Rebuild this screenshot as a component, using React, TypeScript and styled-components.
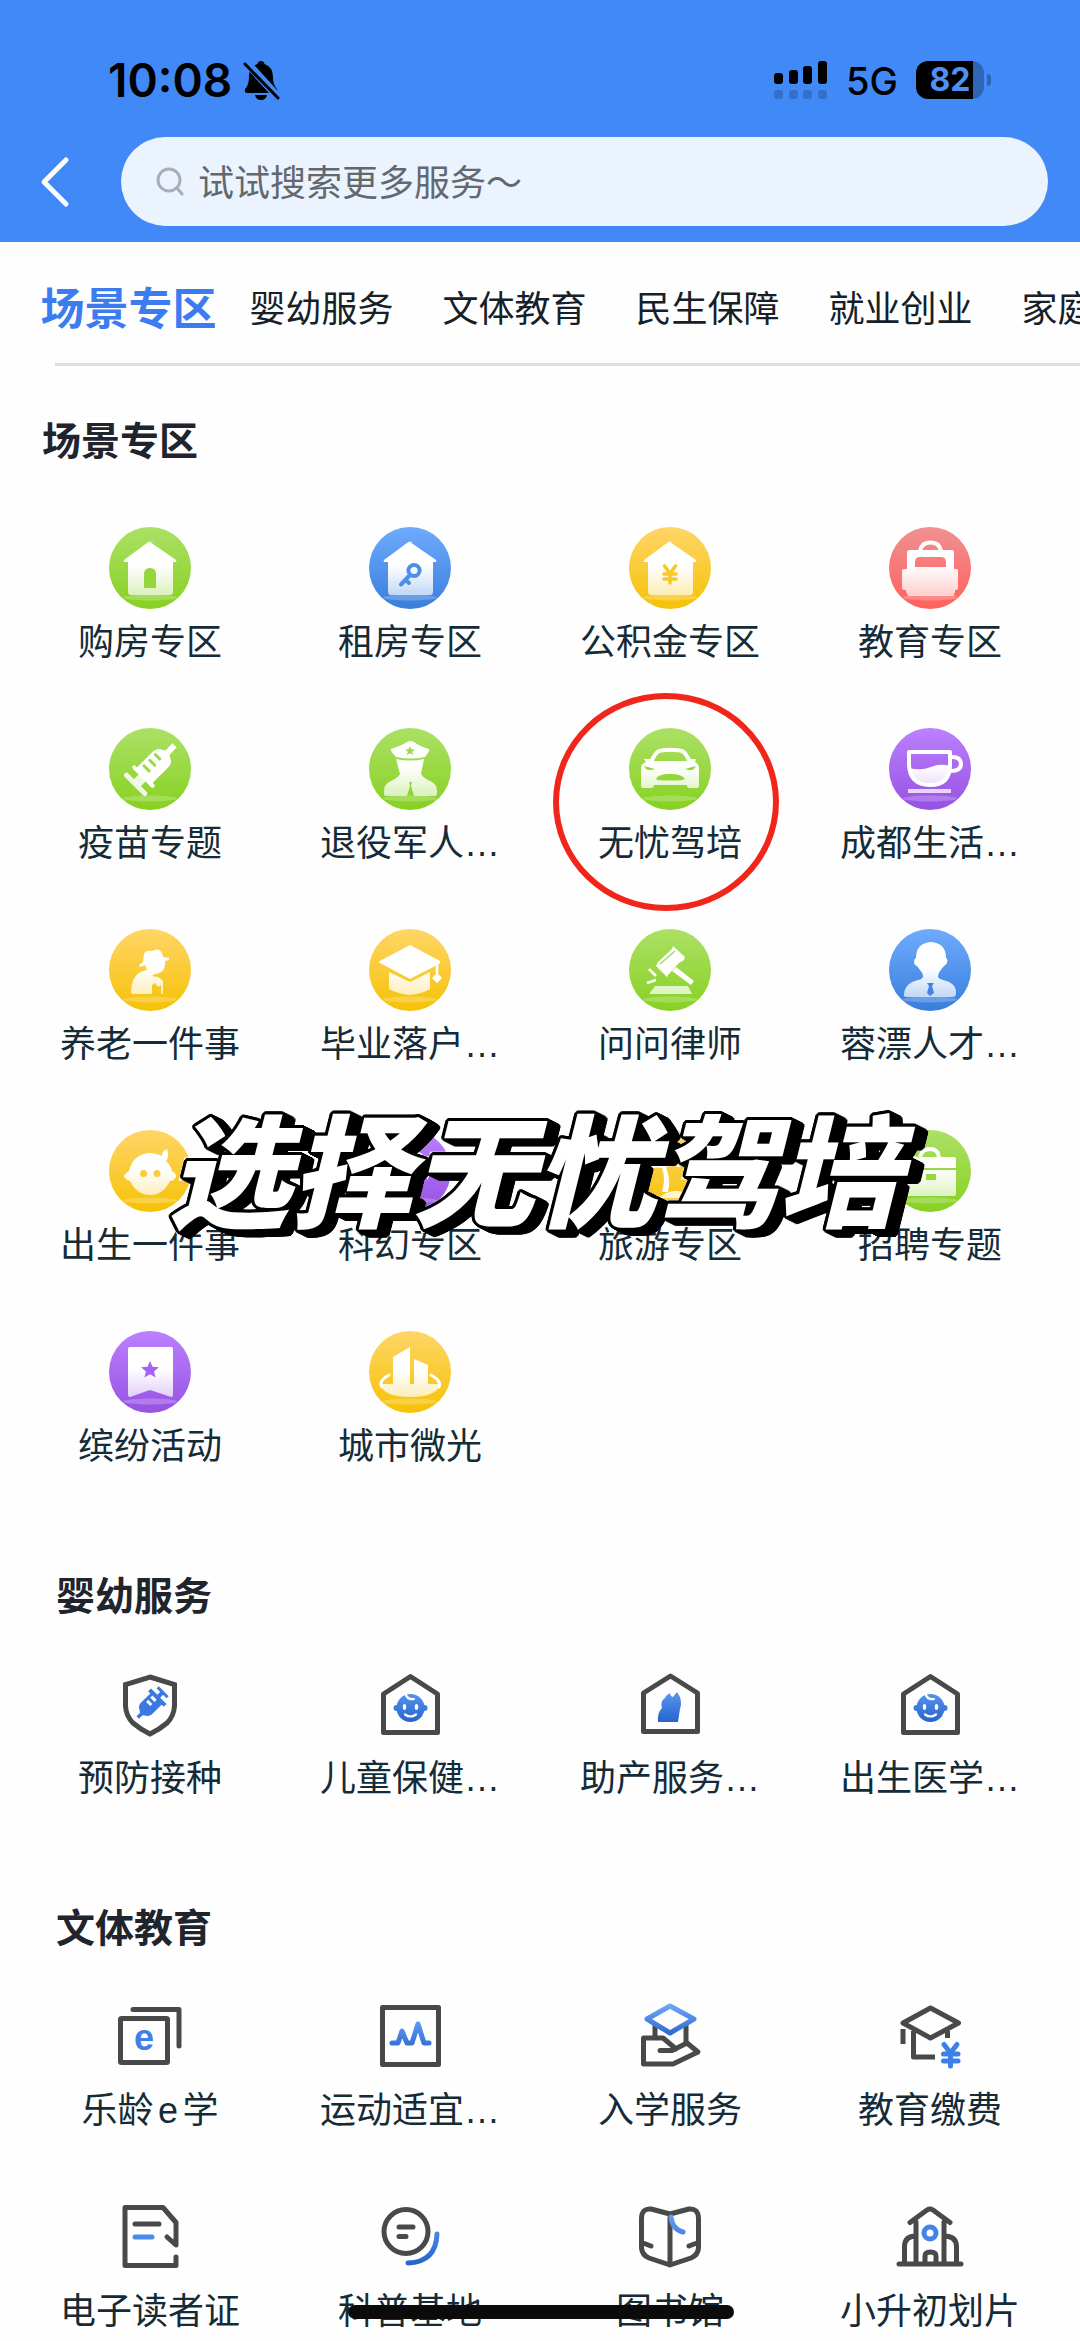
import React from 'react';
import styled, { createGlobalStyle } from 'styled-components';

const sans = `'Liberation Sans', 'Noto Sans CJK SC', sans-serif`;
const cjk = `'Noto Sans CJK SC', sans-serif`;

const GlobalStyle = createGlobalStyle`
  *, *::before, *::after { box-sizing: border-box; }
  body { margin: 0; background: #fefefe; overflow-x: hidden; }
`;

const Page = styled.div`
  position: relative;
  font-family: ${sans};
  color: #152b38;
  background: #fefefe;
  overflow: hidden;
`;

const Header = styled.header`
  background: #4189f7;
  padding: 58px 32px 16px 32px;
`;

const StatusBar = styled.div`
  display: flex;
  align-items: center;
  justify-content: space-between;
  height: 44px;
  padding: 0 64px 0 76px;
  color: #000;
`;

const StatusGroup = styled.div<{ $gap: number }>`
  display: flex;
  align-items: center;
  gap: ${(p) => p.$gap}px;
`;

const Clock = styled.span`
  font: 600 46px/44px Inter, sans-serif;
`;

const Network = styled.span`
  padding-top: 2px;
  font: 500 38px/44px Inter, sans-serif;
`;

const Battery = styled.div`
  position: relative;
  display: flex;
  align-items: center;
  justify-content: center;
  width: 68px;
  height: 38px;
  border-radius: 12px;
  background: linear-gradient(90deg, #000 57px, #2f65b5 57px);
  color: #4f90f5;
  font: 700 32px/38px Inter, sans-serif;

  &::after {
    content: '';
    position: absolute;
    left: 71px;
    width: 4px;
    height: 12px;
    border-radius: 0 4px 4px 0;
    background: #2f65b5;
  }
`;

const SearchRow = styled.div`
  display: flex;
  align-items: center;
  gap: 48px;
  margin-top: 35px;
`;

const BackButton = styled.button`
  display: flex;
  width: 41px;
  padding: 0;
  border: 0;
  background: none;
`;

const SearchBox = styled.label`
  display: flex;
  flex: 1;
  align-items: center;
  gap: 14px;
  height: 89px;
  padding: 0 36px 0 34px;
  border-radius: 45px;
  background: #ebf3fe;
`;

const SearchInput = styled.input`
  flex: 1;
  min-width: 0;
  padding: 0 0 4px;
  border: 0;
  outline: 0;
  background: none;
  color: #63676e;
  font: 400 36px/48px ${cjk};
  &::placeholder { color: #63676e; opacity: 1; }
`;

const Tabs = styled.nav`
  display: flex;
  height: 121px;
  padding: 4px 0 0 32px;
  overflow: hidden;
`;

const Tab = styled.button<{ $active?: boolean }>`
  flex: 0 0 193px;
  height: 120px;
  padding: 0;
  border: 0;
  background: none;
  white-space: nowrap;
  color: ${(p) => (p.$active ? '#3c7bf0' : '#152028')};
  font: ${(p) => (p.$active ? '700 44px' : '400 36px')}/48px ${cjk};
`;

const Divider = styled.hr`
  height: 3px;
  margin: 0 0 0 55px;
  border: 0;
  background: #dfdfdf;
`;

const Section = styled.section<{ $top: number }>`
  padding-top: ${(p) => p.$top}px;
`;

const SectionTitle = styled.h2<{ $indent: number; $gap: number }>`
  margin: 0 0 ${(p) => p.$gap}px ${(p) => p.$indent}px;
  color: #20242d;
  font: 700 39px/48px ${cjk};
`;

const Grid = styled.ul`
  display: grid;
  grid-template-columns: repeat(4, minmax(0, 1fr));
  row-gap: 65px;
  margin: 0;
  padding: 0 20px;
  list-style: none;
`;

const Tile = styled.li`
  position: relative;
`;

const TileLink = styled.a`
  display: flex;
  flex-direction: column;
  align-items: center;
  gap: 14px;
  color: inherit;
  text-decoration: none;
  white-space: nowrap;
  font-size: 36px;
  line-height: 40px;
  text-autospace: normal;
`;

const Ring = styled.span`
  position: absolute;
  top: -35px;
  left: 50%;
  width: 226px;
  height: 218px;
  margin-left: -117px;
  border: 6px solid #f1261b;
  border-radius: 50%;
  pointer-events: none;
`;

const outline = Array.from({ length: 16 }, (_, i) => {
  const a = (i / 16) * Math.PI * 2;
  return [Math.round(Math.cos(a) * 3), Math.round(Math.sin(a) * 3)];
});
const extrusion = [0, 2, 4, 6, 8, 10]
  .flatMap((step) => outline.map(([x, y]) => `${x + step}px ${y + step / 2}px 0 #000`))
  .join(', ');

const Caption = styled.p`
  position: absolute;
  top: 1085px;
  left: 0;
  right: 12px;
  margin: 0;
  text-align: center;
  color: #fff;
  font: italic 900 122px/160px ${cjk};
  -webkit-text-stroke: 7px #fff;
  paint-order: stroke fill;
  stroke-linejoin: round;
  text-shadow: ${extrusion};
  pointer-events: none;
`;

const HomeBar = styled.div`
  position: fixed;
  bottom: 22px;
  left: 50%;
  width: 386px;
  height: 14px;
  margin-left: -192px;
  border-radius: 7px;
  background: #0b0b0b;
`;

const DISC = {
  green: ['#ace066', '#87d122'],
  blue: ['#6fabfd', '#387edc'],
  yellow: ['#ffd567', '#f5c206'],
  red: ['#f09092', '#ff615c'],
  purple: ['#bc80ff', '#9652e2'],
} as const;
type Tone = keyof typeof DISC;

const W = 'url(#fade)';
const HOUSE = 'M41 15 67 33Q68 35 66 35H64V65Q64 68 61 68H22Q19 68 19 65V35H16Q14 35 15 33L38 16Q41 13 44 16Z';

function Disc({ tone, children }: { tone: Tone; children: React.ReactNode }) {
  const [top, bottom] = DISC[tone];
  return (
    <svg width="82" height="82" viewBox="0 0 82 82" aria-hidden="true">
      <defs>
        <linearGradient id={`disc-${tone}`} x1="0" y1="0" x2="0" y2="1">
          <stop offset="0" stopColor={top} />
          <stop offset="1" stopColor={bottom} />
        </linearGradient>
        <linearGradient id="fade" gradientUnits="userSpaceOnUse" x1="0" y1="38" x2="0" y2="70">
          <stop offset="0" stopColor="#fff" />
          <stop offset="1" stopColor="#fff" stopOpacity="0.65" />
        </linearGradient>
      </defs>
      <circle cx="41" cy="41" r="41" fill={`url(#disc-${tone})`} />
      <ellipse cx="41" cy="70.5" rx="27" ry="3" fill="#fff" opacity="0.22" />
      {children}
    </svg>
  );
}

const INK = '#474a49';
const B = 'url(#ink-blue)';

function Line({ children }: { children: React.ReactNode }) {
  return (
    <svg width="82" height="82" viewBox="0 0 82 82" fill="none" stroke={INK} strokeWidth="5" strokeLinecap="round" strokeLinejoin="round" aria-hidden="true">
      <defs>
        <linearGradient id="ink-blue" gradientUnits="userSpaceOnUse" x1="0" y1="10" x2="0" y2="70">
          <stop offset="0" stopColor="#6ea6f8" />
          <stop offset="1" stopColor="#2462cc" />
        </linearGradient>
        <linearGradient id="mid-blue" gradientUnits="userSpaceOnUse" x1="0" y1="28" x2="0" y2="60">
          <stop offset="0" stopColor="#5b97f3" />
          <stop offset="1" stopColor="#2562cb" />
        </linearGradient>
        <linearGradient id="cap-blue" gradientUnits="userSpaceOnUse" x1="0" y1="10" x2="0" y2="40">
          <stop offset="0" stopColor="#6ea6f8" />
          <stop offset="1" stopColor="#2b69d2" />
        </linearGradient>
      </defs>
      {children}
    </svg>
  );
}

const STAR = 'M0-9 2.6-3.2 9-2.8 4 1.4 5.6 7.6 0 4.2-5.6 7.6-4 1.4-9-2.8-2.6-3.2Z';

const BabyHouse = () => (
  <Line>
    <path d="M14.500 31 41.500 13.500 68.500 31V69.500H14.500Z" />
    <g stroke="none">
      <ellipse cx="41.500" cy="45" rx="14" ry="14" fill="url(#mid-blue)" />
      <circle cx="27.500" cy="45" r="3" fill="url(#mid-blue)" />
      <circle cx="55.500" cy="45" r="3" fill="url(#mid-blue)" />
      <ellipse cx="35.500" cy="44" rx="1.700" ry="3" fill="#fff" />
      <ellipse cx="47.500" cy="44" rx="1.700" ry="3" fill="#fff" />
    </g>
    <path d="M36 51.500Q41.500 55.500 47 51.500M37 32Q39 37 45 36" stroke="#fff" strokeWidth="2.200" />
  </Line>
);

type Item = { label: string; icon: React.ReactNode; ringed?: boolean };

const scene: Item[] = [
  {
    label: '购房专区',
    icon: (
      <Disc tone="green">
        <path d={HOUSE} fill={W} />
        <path d="M35 61V47Q35 41 41 41T47 47V61Z" fill="#95d63c" />
      </Disc>
    ),
  },
  {
    label: '租房专区',
    icon: (
      <Disc tone="blue">
        <path d={HOUSE} fill={W} />
        <g fill="none" stroke="#4d8ee9" strokeWidth="4" strokeLinecap="round">
          <circle cx="45" cy="43.500" r="5.600" />
          <path d="M41 48 32 57.500M36.500 53 40 56" />
        </g>
      </Disc>
    ),
  },
  {
    label: '公积金专区',
    icon: (
      <Disc tone="yellow">
        <path d={HOUSE} fill={W} />
        <path d="M35.500 39 41 46.500 46.500 39M41 47V56M35 47H47M35 52H47" fill="none" stroke="#f8c92c" strokeWidth="3.600" strokeLinecap="round" />
      </Disc>
    ),
  },
  {
    label: '教育专区',
    icon: (
      <Disc tone="red">
        <path d="M31 25Q32 15.500 41.500 15.500T52 25" fill="none" stroke="#fff" strokeWidth="4" />
        <path fillRule="evenodd" d="M21 23H63Q65 23 65 25V42H67Q69 42 69 44V61Q69 63 67 63H66V65Q65 66 65 69H19Q18 66 17 65V63H15Q13 63 13 61V44Q13 42 15 42H18V25Q18 23 21 23ZM31 30Q26 30 26 35V40H57V35Q57 30 52 30Z" fill={W} />
      </Disc>
    ),
  },
  {
    label: '疫苗专题',
    icon: (
      <Disc tone="green">
        <g transform="translate(41.500 41.500) rotate(-45)" strokeLinecap="round">
          <path d="M-10-11H14Q20-11 22-6L24-3H34V3H24L22 6Q20 11 14 11H-10Z" fill="#fff" />
          <path d="M-21-13V13" stroke="#fff" strokeWidth="5" strokeOpacity="0.85" />
          <path d="M-10-13V13" stroke="#fff" strokeWidth="4" />
          <path d="M-19 0H-10" stroke="#fff" strokeWidth="10" strokeLinecap="butt" strokeOpacity="0.85" />
          <path d="M-2-7V0M6-7V0M14-7V-1" stroke="#9bd948" strokeWidth="3" />
        </g>
      </Disc>
    ),
  },
  {
    label: '退役军人…',
    icon: (
      <Disc tone="green">
        <path d="M22 21Q34 17 38 14Q41 12 45 14Q50 18 60 21Q61 23 56 29Q41 32 27 29Q21 23 22 21Z" fill="#fff" />
        <path d={STAR} transform="translate(41 23) scale(.55)" fill="#9fda4e" />
        <path d="M27 31Q41 34 55 31L52 46Q54 50 63 54Q68 57 68 63V66Q68 68 66 68H45L42 58 43 54H40L41 58 38 68H17Q15 68 15 66V63Q15 57 20 54Q29 50 31 46Z" fill={W} />
      </Disc>
    ),
  },
  {
    label: '无忧驾培',
    ringed: true,
    icon: (
      <Disc tone="green">
        <path d="M22 35Q26 23 32 22.500Q41 21 51 22.500Q57 23 61 35" fill="none" stroke="#fff" strokeWidth="4" />
        <path d="M15 31H21L23 33H60L62 31H67L66 34Q70 36 70 40V58Q70 60 68 60H60Q58 60 58 57H25Q25 60 22 60H14Q12 60 12 58V40Q12 36 17 34Z" fill={W} />
        <path d="M15 38 26 41Q20 43 17 41ZM67 38 56 41Q62 43 65 41ZM27 51Q29 46 41 46T56 51Q54 52.500 41 52.500T27 51Z" fill="#93d53a" />
      </Disc>
    ),
  },
  {
    label: '成都生活…',
    icon: (
      <Disc tone="purple">
        <path d="M20 24H61V37Q61 57 41 57T20 37Z" fill="none" stroke="#fff" strokeWidth="4" strokeLinejoin="round" />
        <path d="M20 40Q32 43 42 39Q51 35 61 38Q61 58 41 58T20 40Z" fill={W} />
        <path d="M63 29Q72 29 72 36T61 43" fill="none" stroke="#fff" strokeWidth="4" />
        <path d="M19 63H62" stroke="#fff" strokeOpacity="0.75" strokeWidth="4" />
      </Disc>
    ),
  },
  {
    label: '养老一件事',
    icon: (
      <Disc tone="yellow">
        <path d="M35 25Q37 21 43 22Q50 18 53 24L54 28L60 29Q61 31 56 32Q57 44 46 45L43 47Q53 48 54 53V65H52V56L49 58L46 54L43 56V65H24Q22 65 22 62Q23 43 38 41L36 36L31 38Q29 36 34 33Z" fill={W} />
      </Disc>
    ),
  },
  {
    label: '毕业落户…',
    icon: (
      <Disc tone="yellow">
        <path d="M41 16 71 32Q72 34 70 35L41 50 11 34Q9 33 11 32Z" fill="#fff" />
        <path d="M20 43 41 53 61 43V60Q53 65 41 66Q29 65 20 60Z" fill={W} />
        <path d="M68 34V48" stroke="#fff" strokeWidth="2.500" />
        <path d="M68 44 73 49 68 54 63 49Z" fill="#fff" />
      </Disc>
    ),
  },
  {
    label: '问问律师',
    icon: (
      <Disc tone="green">
        <path d="M44 17 56 28 55 31 50 34 39 46 38 48 27 37 29 33 43 20Z" fill="#fff" />
        <path d="M31 35 46 22" stroke="#a5dc5a" strokeWidth="1.500" />
        <path d="M47 38 65 52 62 56 43 42Z" fill="#fff" />
        <path d="M20 40 27 47M18 54 27 51" stroke="#fff" strokeWidth="2.500" />
        <path d="M26 57H59L63 65H20Z" fill="#fff" opacity="0.72" />
      </Disc>
    ),
  },
  {
    label: '蓉漂人才…',
    icon: (
      <Disc tone="blue">
        <path d="M42 13Q57 14 57 29Q59 30 58 34Q57 36 55 37L51 42Q49 45 49 48Q50 50 54 51Q68 54 67 65Q67 68 63 68H18Q14 68 15 65Q16 54 29 51Q34 50 34 47Q34 44 31 41L28 37Q25 36 25 33Q25 30 27 29Q27 14 42 13Z" fill={W} />
        <path d="M38 54H45L43 57 45 64 41 67 38 64 40 57Z" fill="#4385e2" />
      </Disc>
    ),
  },
  {
    label: '出生一件事',
    icon: (
      <Disc tone="yellow">
        <path d="M41 23Q49 24 53 26Q52 22 58 19Q59 22 59 25Q59 29 57 31Q62 36 63 41Q68 44 67 47Q65 51 61 51Q54 65 41 65T21 51Q17 50 15 47Q15 44 20 41Q24 24 41 23Z" fill={W} />
        <circle cx="34.500" cy="43.500" r="3.500" fill="#fbcb38" />
        <circle cx="48" cy="43.500" r="3.500" fill="#fbcb38" />
      </Disc>
    ),
  },
  {
    label: '科幻专区',
    icon: (
      <Disc tone="purple">
        <circle cx="41" cy="40" r="20" fill={W} />
        <path d="M44 54Q62 48 66 30" fill="none" stroke="#fff" strokeWidth="3" />
        <circle cx="54" cy="50" r="4" fill="#a765ee" />
      </Disc>
    ),
  },
  {
    label: '旅游专区',
    icon: (
      <Disc tone="yellow">
        <path d="M17 42Q22 30 33 33Q42 26 51 37Q43 35 37 37Q42 50 39 62H33Q37 48 33 38Q26 36 17 42Z" fill="#fff" />
        <path d="M30 68Q38 60 48 61T67 68Z" fill="#fff" opacity="0.8" />
      </Disc>
    ),
  },
  {
    label: '招聘专题',
    icon: (
      <Disc tone="green">
        <path d="M31 27Q33 19 41 19T50 27" fill="none" stroke="#fff" strokeWidth="4" />
        <path d="M17 27H65Q67 27 67 29V38H15V29Q15 27 17 27Z" fill="#fff" />
        <path fillRule="evenodd" d="M15 40H67V64Q67 66 65 66H17Q15 66 15 64ZM37 44V50H47V44Z" fill={W} />
      </Disc>
    ),
  },
  {
    label: '缤纷活动',
    icon: (
      <Disc tone="purple">
        <path d="M21 16H62Q64 16 64 18V64Q64 66 62 66L41 59 21 66Q19 66 19 64V18Q19 16 21 16Z" fill={W} />
        <path d={STAR} transform="translate(41 39)" fill="#a564ee" />
      </Disc>
    ),
  },
  {
    label: '城市微光',
    icon: (
      <Disc tone="yellow">
        <path d="M24 26 41 16V53H45V28L59 34V53H71Q68 66 41 66T12 53H24Z" fill={W} />
        <path d="M20 44Q9 50 13 56M62 44Q73 50 70 56" fill="none" stroke="#fff" strokeWidth="3" strokeLinecap="round" />
      </Disc>
    ),
  },
];

const infant: Item[] = [
  {
    label: '预防接种',
    icon: (
      <Line>
        <path d="M41 14 65.500 21.500V43Q65 53 58 60Q51 66 41 71Q31 66 24 60Q17 53 16.500 43V21.500Z" strokeLinejoin="miter" />
        <g transform="translate(42 41) rotate(-45)" stroke="none" fill="#3b79e0">
          <path d="M-19-1.500H-14L-11-6Q-9-8-7-8H7V-11H11V-2H15V-7H18V7H15V2H11V11H7V8H-7Q-9 8-11 6L-14 2H-19Z" />
          <path d="M-2-5H1V1H-2ZM4-5H7V1H4Z" fill="#fff" />
        </g>
      </Line>
    ),
  },
  { label: '儿童保健…', icon: <BabyHouse /> },
  {
    label: '助产服务…',
    icon: (
      <Line>
        <path d="M14.500 30 41.500 13 68.500 30V68.500H14.500Z" />
        <path d="M37 33 41 30Q41 33 44 34L48 29 51 34Q53 41 51 46Q50 52 49 59H29Q28 50 33 45Q31 38 36 35Z" fill="url(#mid-blue)" stroke="none" />
      </Line>
    ),
  },
  { label: '出生医学…', icon: <BabyHouse /> },
];

const culture: Item[] = [
  {
    label: '乐龄e学',
    icon: (
      <Line>
        <rect x="11.500" y="23.500" width="47" height="44" rx="1" />
        <path d="M24 14.500H70V51" />
        <text x="35" y="55" textAnchor="middle" fill="#3f80e6" stroke="none" fontFamily="Liberation Sans, sans-serif" fontWeight="700" fontSize="36">e</text>
      </Line>
    ),
  },
  {
    label: '运动适宜…',
    icon: (
      <Line>
        <rect x="13.500" y="12.500" width="56" height="57" />
        <path d="M23 48H29L33 36 38 48H43L49 29 55 48H60" stroke="url(#mid-blue)" />
      </Line>
    ),
  },
  {
    label: '入学服务',
    icon: (
      <Line>
        <path d="M26 31V42M57 31V47" />
        <path d="M41 11 65 24 41 38 18 24Z" stroke="url(#cap-blue)" />
        <path d="M31 55.500H43L58 48 69 57 44 69H14.500V43H34L47 54" />
      </Line>
    ),
  },
  {
    label: '教育缴费',
    icon: (
      <Line>
        <path d="M41.500 13 69.500 28 41.500 43 14 28Z" />
        <path d="M14 34V49M24.500 36V62H46M58.500 36V43" strokeLinecap="butt" />
        <path d="M55 49.500 61.500 58 68 49.500M61.500 59V71M54.500 59H69M54.500 66H69" stroke="#3f80e6" />
      </Line>
    ),
  },
  {
    label: '电子读者证',
    icon: (
      <Line>
        <path d="M67 61V69.500H16V11.500H54L67 26.500V49L58 41M26 28H50" />
        <path d="M26 41H43" stroke="#4d8bea" />
      </Line>
    ),
  },
  {
    label: '科普基地',
    icon: (
      <Line>
        <circle cx="37" cy="35.500" r="22" />
        <path d="M30 31H44M30 40.500H37" />
        <path d="M68 38Q67 66 39 67" stroke={B} />
      </Line>
    ),
  },
  {
    label: '图书馆',
    icon: (
      <Line>
        <path d="M41 18 22 13Q13 12 12.500 22V52Q13 59 20 62L41 69 62 62Q69 59 69.500 52V22Q69 12 60 13ZM41 18V69M14 47 22 50M68 47 60 50" />
        <path d="M42 21Q43 33 54 36" stroke={B} />
      </Line>
    ),
  },
  {
    label: '小升初划片',
    icon: (
      <Line>
        <path d="M10 68H72M21 26.500 38 14Q41 12 44 14L61 26.500M27 26V68M55 26V68M27 40Q16 40 15.500 50V68M55 40Q67 40 67.500 50V68M36 68V60Q36 56 41.500 56T47 60V68" />
        <circle cx="41" cy="37" r="6" stroke="#4484ea" />
      </Line>
    ),
  },
];

function TileGrid({ items }: { items: Item[] }) {
  return (
    <Grid>
      {items.map((item) => (
        <Tile key={item.label}>
          <TileLink href="#">
            {item.icon}
            <span>{item.label}</span>
          </TileLink>
          {item.ringed && <Ring />}
        </Tile>
      ))}
    </Grid>
  );
}

const tabs = ['场景专区', '婴幼服务', '文体教育', '民生保障', '就业创业', '家庭服务'];

export default function App() {
  return (
    <Page lang="zh-CN">
      <GlobalStyle />
      <Header>
        <StatusBar>
          <StatusGroup $gap={10}>
            <Clock>10:08</Clock>
            <svg width="38" height="40" viewBox="0 0 38 40" aria-hidden="true">
              <path d="M19 1Q22 1 22.500 4Q31 7 31 17Q31 25 35 29Q36 33 33 33H5Q2 33 3 29Q7 25 7 17Q7 7 15.500 4Q16 1 19 1ZM13 35H25Q24 40 19 40T13 35Z" />
              <path d="M4 2 37 38" stroke="#4189f7" strokeWidth="8" />
              <path d="M3 4 36 38" stroke="#000" strokeWidth="3" strokeLinecap="round" />
            </svg>
          </StatusGroup>
          <StatusGroup $gap={18}>
            <svg width="54" height="38" viewBox="0 0 54 38" aria-hidden="true">
              <rect x="0" y="12" width="9" height="11" rx="3" />
              <rect x="15" y="9" width="9" height="14" rx="3" />
              <rect x="29" y="5" width="9" height="18" rx="3" />
              <rect x="44" y="0" width="9" height="23" rx="3" />
              <g fill="#3270cb">
                <rect x="0" y="29" width="9" height="9" rx="3" />
                <rect x="15" y="29" width="9" height="9" rx="3" />
                <rect x="29" y="29" width="9" height="9" rx="3" />
                <rect x="44" y="29" width="9" height="9" rx="3" />
              </g>
            </svg>
            <Network>5G</Network>
            <Battery>82</Battery>
          </StatusGroup>
        </StatusBar>
        <SearchRow>
          <BackButton aria-label="返回">
            <svg width="41" height="52" viewBox="0 0 41 52" fill="none" stroke="#fff" strokeWidth="5" strokeLinecap="round" strokeLinejoin="round" aria-hidden="true">
              <path d="M34 4 12 26 34 48" />
            </svg>
          </BackButton>
          <SearchBox>
            <svg width="29" height="29" viewBox="0 0 29 29" fill="none" stroke="#a9adb5" strokeWidth="3" strokeLinecap="round" aria-hidden="true">
              <circle cx="14" cy="13" r="11" />
              <path d="M22 21 27 27" />
            </svg>
            <SearchInput type="search" aria-label="搜索服务" placeholder="试试搜索更多服务～" />
          </SearchBox>
        </SearchRow>
      </Header>
      <Tabs>
        {tabs.map((t, i) => (
          <Tab key={t} $active={i === 0}>
            {t}
          </Tab>
        ))}
      </Tabs>
      <Divider />
      <main>
        <Section $top={48}>
          <SectionTitle $indent={42} $gap={65}>场景专区</SectionTitle>
          <TileGrid items={scene} />
        </Section>
        <Section $top={102}>
          <SectionTitle $indent={56} $gap={46}>婴幼服务</SectionTitle>
          <TileGrid items={infant} />
        </Section>
        <Section $top={102}>
          <SectionTitle $indent={56} $gap={46}>文体教育</SectionTitle>
          <TileGrid items={culture} />
        </Section>
      </main>
      <Caption>选择无忧驾培</Caption>
      <HomeBar />
    </Page>
  );
}
